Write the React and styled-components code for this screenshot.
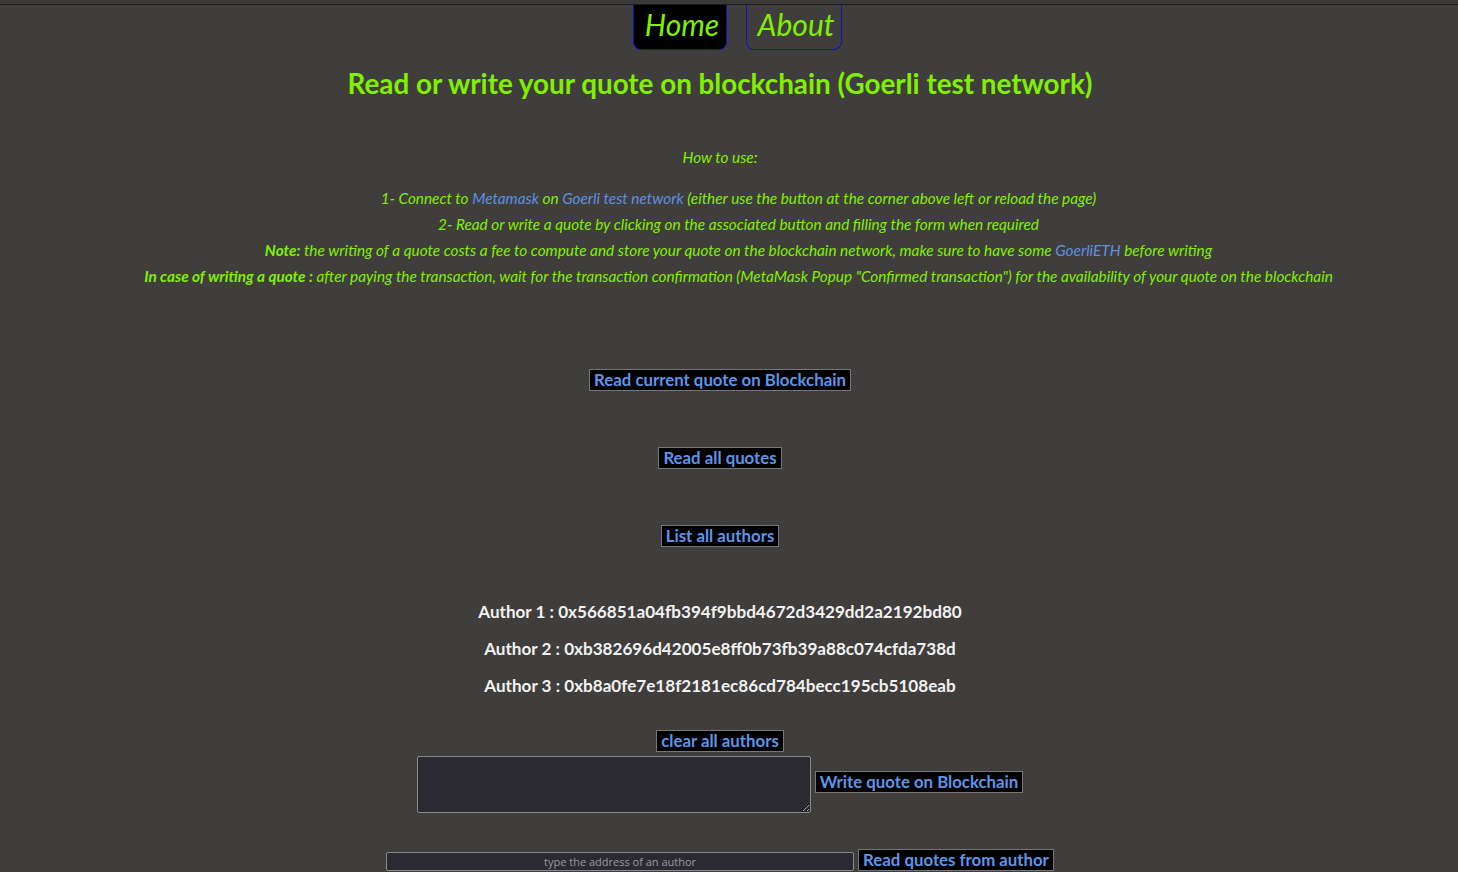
import React from 'react';
import styled, { createGlobalStyle } from 'styled-components';

const GlobalStyle = createGlobalStyle`
  html, body {
    margin: 0;
    padding: 0;
    background: #403e3c;
  }
  body {
    font-family: Lato, "Open Sans", "Noto Sans", sans-serif;
  }
`;

const Page = styled.div`
  width: 1440px;
  min-height: 872px;
  background: #403e3c;
  display: flex;
  flex-direction: column;
  align-items: center;
`;

const TopStrip = styled.div`
  align-self: stretch;
  width: 1458px;
  height: 4px;
  background: #3b3937;
  border-bottom: 1px solid #1c1c1c;
`;

const Nav = styled.nav`
  display: flex;
  gap: 19px;
  padding-left: 35px;
`;

const NavButton = styled.a`
  display: flex;
  align-items: center;
  justify-content: center;
  width: ${p => p.w}px;
  height: 45px;
  box-sizing: border-box;
  background: ${p => (p.active ? '#000' : 'transparent')};
  border: 1px solid #1010c8;
  border-top: none;
  border-radius: 0 0 8px 8px;
  color: #80f000;
  font-style: italic;
  font-size: 30px;
  padding: 0 0 6px 4px;
  text-decoration: none;
`;

const Title = styled.h1`
  margin: 19px 0 0;
  color: #80f000;
  font-size: 27.8px;
  font-weight: 700;
  line-height: 30px;
`;

const Instructions = styled.div`
  margin-top: 45px;
  display: flex;
  flex-direction: column;
  align-items: center;
  color: #80f000;
  font-style: italic;
  font-size: 15.35px;
  line-height: 26px;
`;

const HowTo = styled.p`
  margin: 0 0 15px;
`;

const Steps = styled.ul`
  margin: 0;
  padding: 0 0 0 37px;
  list-style: none;
  display: flex;
  flex-direction: column;
  align-items: center;
`;

const Line = styled.li`
  margin: 0;
`;

const Link = styled.span`
  color: #5e8fe0;
`;

const Strong = styled.b`
  font-weight: 700;
`;

const ActionButton = styled.button`
  margin-top: ${p => p.mt || 0}px;
  background: #000;
  color: #5e95e8;
  border: 1px solid #777;
  font-family: Lato, "Open Sans", sans-serif;
  font-weight: 700;
  font-size: 16.8px;
  line-height: 20px;
  padding: 0 4px;
  cursor: pointer;
`;

const Authors = styled.div`
  margin-top: 55px;
  display: flex;
  flex-direction: column;
  align-items: center;
  gap: 17px;
`;

const Author = styled.p`
  margin: 0;
  color: #f2f2f2;
  font-weight: 700;
  font-size: 17.1px;
  line-height: 20px;
`;

const Row = styled.div`
  display: flex;
  align-items: ${p => p.align || 'flex-start'};
  gap: 4px;
  margin-top: ${p => p.mt || 0}px;
`;

const QuoteArea = styled.textarea`
  width: 394px;
  height: 57px;
  box-sizing: border-box;
  background: #2b2a33;
  border: 1px solid #8a8a8a;
  border-radius: 2px;
  color: #eee;
  resize: vertical;
  color-scheme: dark;
`;

const AddressInput = styled.input`
  width: 468px;
  height: 19px;
  box-sizing: border-box;
  background: #2b2a33;
  border: 1px solid #8a8a8a;
  border-radius: 2px;
  color: #ddd;
  text-align: center;
  font-family: "Open Sans", Lato, sans-serif;
  font-size: 11px;
  padding: 0;
  &::placeholder {
    color: #9a9a9a;
  }
`;

const authors = [
  '0x566851a04fb394f9bbd4672d3429dd2a2192bd80',
  '0xb382696d42005e8ff0b73fb39a88c074cfda738d',
  '0xb8a0fe7e18f2181ec86cd784becc195cb5108eab',
];

export default function App() {
  return (
    <>
      <GlobalStyle />
      <Page>
        <TopStrip />
        <Nav>
          <NavButton active w={94}>Home</NavButton>
          <NavButton w={96}>About</NavButton>
        </Nav>
        <Title>Read or write your quote on blockchain (Goerli test network)</Title>
        <Instructions>
          <HowTo>How to use:</HowTo>
          <Steps>
            <Line>
              1- Connect to <Link>Metamask</Link> on <Link>Goerli test network</Link> (either use the button at the corner above left or reload the page)
            </Line>
            <Line>2- Read or write a quote by clicking on the associated button and filling the form when required</Line>
            <Line>
              <Strong>Note:</Strong> the writing of a quote costs a fee to compute and store your quote on the blockchain network, make sure to have some <Link>GoerliETH</Link> before writing
            </Line>
            <Line>
              <Strong>In case of writing a quote :</Strong> after paying the transaction, wait for the transaction confirmation (MetaMask Popup "Confirmed transaction") for the availability of your quote on the blockchain
            </Line>
          </Steps>
        </Instructions>
        <ActionButton mt={80}>Read current quote on Blockchain</ActionButton>
        <ActionButton mt={56}>Read all quotes</ActionButton>
        <ActionButton mt={56}>List all authors</ActionButton>
        <Authors>
          {authors.map((a, i) => (
            <Author key={a}>Author {i + 1} : {a}</Author>
          ))}
        </Authors>
        <ActionButton mt={34}>clear all authors</ActionButton>
        <Row mt={4}>
          <QuoteArea />
          <ActionButton mt={15}>Write quote on Blockchain</ActionButton>
        </Row>
        <Row mt={36} align="flex-end">
          <AddressInput placeholder="type the address of an author" />
          <ActionButton>Read quotes from author</ActionButton>
        </Row>
      </Page>
    </>
  );
}
